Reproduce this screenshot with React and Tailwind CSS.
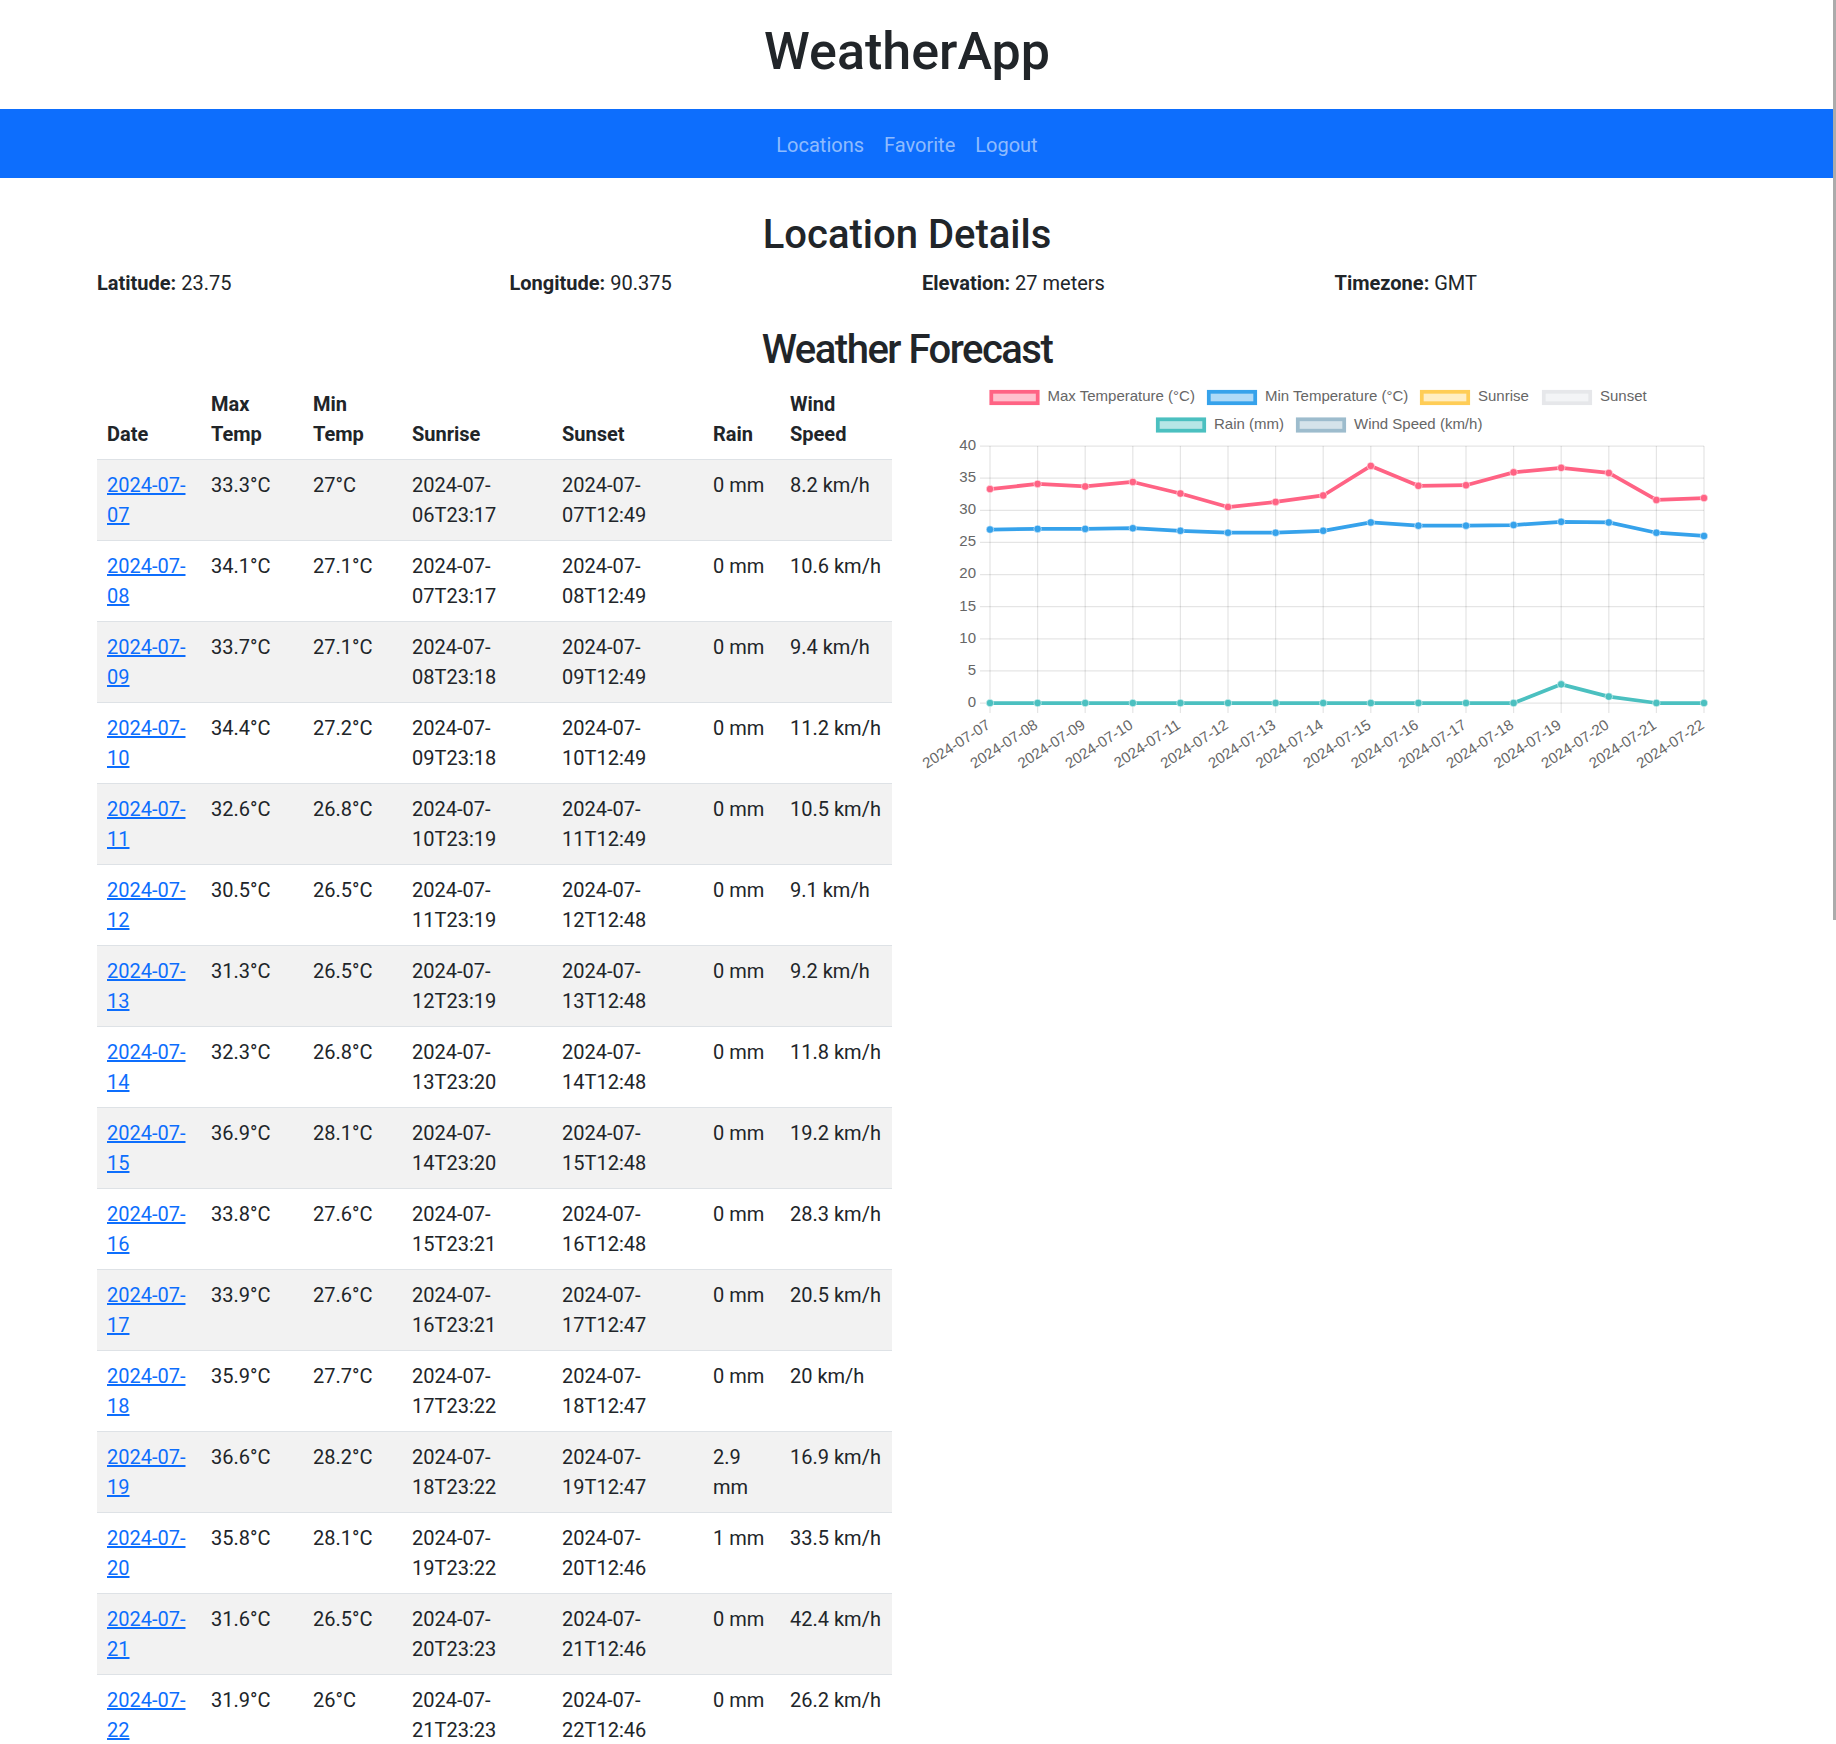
import React from "react";

const forecast = [
  { date: "2024-07-07", max: "33.3", min: "27", sunrise: "2024-07-06T23:17", sunset: "2024-07-07T12:49", rain: "0", wind: "8.2" },
  { date: "2024-07-08", max: "34.1", min: "27.1", sunrise: "2024-07-07T23:17", sunset: "2024-07-08T12:49", rain: "0", wind: "10.6" },
  { date: "2024-07-09", max: "33.7", min: "27.1", sunrise: "2024-07-08T23:18", sunset: "2024-07-09T12:49", rain: "0", wind: "9.4" },
  { date: "2024-07-10", max: "34.4", min: "27.2", sunrise: "2024-07-09T23:18", sunset: "2024-07-10T12:49", rain: "0", wind: "11.2" },
  { date: "2024-07-11", max: "32.6", min: "26.8", sunrise: "2024-07-10T23:19", sunset: "2024-07-11T12:49", rain: "0", wind: "10.5" },
  { date: "2024-07-12", max: "30.5", min: "26.5", sunrise: "2024-07-11T23:19", sunset: "2024-07-12T12:48", rain: "0", wind: "9.1" },
  { date: "2024-07-13", max: "31.3", min: "26.5", sunrise: "2024-07-12T23:19", sunset: "2024-07-13T12:48", rain: "0", wind: "9.2" },
  { date: "2024-07-14", max: "32.3", min: "26.8", sunrise: "2024-07-13T23:20", sunset: "2024-07-14T12:48", rain: "0", wind: "11.8" },
  { date: "2024-07-15", max: "36.9", min: "28.1", sunrise: "2024-07-14T23:20", sunset: "2024-07-15T12:48", rain: "0", wind: "19.2" },
  { date: "2024-07-16", max: "33.8", min: "27.6", sunrise: "2024-07-15T23:21", sunset: "2024-07-16T12:48", rain: "0", wind: "28.3" },
  { date: "2024-07-17", max: "33.9", min: "27.6", sunrise: "2024-07-16T23:21", sunset: "2024-07-17T12:47", rain: "0", wind: "20.5" },
  { date: "2024-07-18", max: "35.9", min: "27.7", sunrise: "2024-07-17T23:22", sunset: "2024-07-18T12:47", rain: "0", wind: "20" },
  { date: "2024-07-19", max: "36.6", min: "28.2", sunrise: "2024-07-18T23:22", sunset: "2024-07-19T12:47", rain: "2.9", wind: "16.9" },
  { date: "2024-07-20", max: "35.8", min: "28.1", sunrise: "2024-07-19T23:22", sunset: "2024-07-20T12:46", rain: "1", wind: "33.5" },
  { date: "2024-07-21", max: "31.6", min: "26.5", sunrise: "2024-07-20T23:23", sunset: "2024-07-21T12:46", rain: "0", wind: "42.4" },
  { date: "2024-07-22", max: "31.9", min: "26", sunrise: "2024-07-21T23:23", sunset: "2024-07-22T12:46", rain: "0", wind: "26.2" },
];

// chart geometry (canvas px)
const X0 = 68;
const X1 = 782;
const Y0 = 324; // value 0
const Y40 = 67; // value 40
const px = (i) => X0 + (i * (X1 - X0)) / (forecast.length - 1);
const py = (v) => Y0 - (v * (Y0 - Y40)) / 40;

const legend = [
  { label: "Max Temperature (°C)", border: "rgb(255,99,132)", fill: "rgba(255,99,132,0.4)", x: 67.5, y: 18.5 },
  { label: "Min Temperature (°C)", border: "rgb(54,162,235)", fill: "rgba(54,162,235,0.4)", x: 285, y: 18.5 },
  { label: "Sunrise", border: "rgb(255,205,86)", fill: "rgba(255,205,86,0.35)", x: 498, y: 18.5 },
  { label: "Sunset", border: "#e6e7ea", fill: "#f3f4f6", x: 620, y: 18.5 },
  { label: "Rain (mm)", border: "rgb(75,192,192)", fill: "rgba(75,192,192,0.4)", x: 234, y: 46 },
  { label: "Wind Speed (km/h)", border: "#9dbccd", fill: "#d5e3ea", x: 374, y: 46 },
];

const series = [
  { key: "max", color: "rgb(255,99,132)" },
  { key: "min", color: "rgb(54,162,235)" },
  { key: "rain", color: "rgb(75,192,192)" },
];

function ForecastChart() {
  const font = "'Liberation Sans', Arial, sans-serif";
  return (
    <svg width="795" height="398" viewBox="0 0 795 398" overflow="visible" className="block overflow-visible">
      {legend.map((l) => (
        <g key={l.label}>
          <rect x={l.x + 1.8} y={l.y - 5.7} width="46.4" height="11.4" fill={l.fill} stroke={l.border} strokeWidth="3.75" />
          <text x={l.x + 58} y={l.y} dominantBaseline="middle" fontSize="15" fill="#666" fontFamily={font}>
            {l.label}
          </text>
        </g>
      ))}

      {/* horizontal grid + y ticks */}
      {[0, 5, 10, 15, 20, 25, 30, 35, 40].map((v) => (
        <g key={v}>
          <line x1="58" x2={X1} y1={py(v)} y2={py(v)} stroke="rgba(0,0,0,0.1)" strokeWidth="1.25" />
          <text x="54" y={py(v)} textAnchor="end" dominantBaseline="middle" fontSize="15" fill="#666" fontFamily={font}>
            {v}
          </text>
        </g>
      ))}

      {/* vertical grid + x ticks */}
      {forecast.map((d, i) => (
        <g key={d.date}>
          <line x1={px(i)} x2={px(i)} y1={Y40} y2={Y0 + 10} stroke="rgba(0,0,0,0.1)" strokeWidth="1.25" />
          <text
            transform={`translate(${px(i) - 1}, ${Y0 + 21}) rotate(-33)`}
            textAnchor="end"
            dominantBaseline="middle"
            fontSize="15"
            fill="#666"
            fontFamily={font}
          >
            {d.date}
          </text>
        </g>
      ))}

      {series.map((s) => (
        <g key={s.key}>
          <polyline
            points={forecast.map((d, i) => `${px(i)},${py(parseFloat(d[s.key]))}`).join(" ")}
            fill="none"
            stroke={s.color}
            strokeWidth="3.75"
            strokeLinejoin="round"
          />
          {forecast.map((d, i) => (
            <circle key={i} cx={px(i)} cy={py(parseFloat(d[s.key]))} r="3.75" fill={s.color} stroke="rgba(255,255,255,0.5)" strokeWidth="1" />
          ))}
        </g>
      ))}
    </svg>
  );
}

export default function App() {
  return (
    <div className="min-h-screen bg-white text-[#212529] font-[Roboto,'Liberation_Sans',sans-serif] text-[20px] leading-[30px]">
      <header className="w-[1814px] pt-[21px] pb-[26px]">
        <h1 className="text-center text-[52px] leading-[62px] font-medium">WeatherApp</h1>
      </header>

      <nav className="bg-[#0d6efd] h-[69px]">
        <div className="w-[1814px] h-full flex items-center justify-center pt-[2px]">
          {["Locations", "Favorite", "Logout"].map((link) => (
            <a key={link} href="#" className="px-[10px] text-[rgba(255,255,255,0.55)]">
              {link}
            </a>
          ))}
        </div>
      </nav>

      <div className="w-[1814px]">
        <main className="w-[1650px] mx-auto px-[15px] pt-[33px] pb-[40px]">
          <h2 className="text-center text-[40px] leading-[48px] font-medium mb-[9px]">Location Details</h2>
          <div className="grid grid-cols-4 gap-[30px]">
            <p><span className="font-bold">Latitude:</span> 23.75</p>
            <p><span className="font-bold">Longitude:</span> 90.375</p>
            <p><span className="font-bold">Elevation:</span> 27 meters</p>
            <p><span className="font-bold">Timezone:</span> GMT</p>
          </div>

          <h2 className="text-center text-[40px] leading-[48px] font-medium tracking-[-1.5px] mt-[28px] mb-[5px]">Weather Forecast</h2>
          <div className="grid grid-cols-2 gap-[30px] items-start">
            <table className="w-full table-fixed border-collapse">
              <colgroup>
                <col className="w-[104px]" />
                <col className="w-[102px]" />
                <col className="w-[99px]" />
                <col className="w-[150px]" />
                <col className="w-[151px]" />
                <col className="w-[77px]" />
                <col className="w-[112px]" />
              </colgroup>
              <thead>
                <tr className="align-bottom">
                  {["Date", "Max Temp", "Min Temp", "Sunrise", "Sunset", "Rain", "Wind Speed"].map((h) => (
                    <th key={h} className="p-[10px] text-left font-bold border-b border-[#dee2e6]">
                      {h}
                    </th>
                  ))}
                </tr>
              </thead>
              <tbody>
                {forecast.map((day, index) => (
                  <tr key={day.date} className={index % 2 === 0 ? "bg-[#f2f2f2] align-top" : "bg-white align-top"}>
                    <td className="p-[10px] border-b border-[#dee2e6]">
                      <a href="#" className="text-[#0d6efd] underline">{day.date}</a>
                    </td>
                    <td className="p-[10px] border-b border-[#dee2e6]">{day.max}°C</td>
                    <td className="p-[10px] border-b border-[#dee2e6]">{day.min}°C</td>
                    <td className="p-[10px] border-b border-[#dee2e6]">{day.sunrise}</td>
                    <td className="p-[10px] border-b border-[#dee2e6]">{day.sunset}</td>
                    <td className="p-[10px] border-b border-[#dee2e6]">{day.rain} mm</td>
                    <td className="p-[10px] border-b border-[#dee2e6]">{day.wind} km/h</td>
                  </tr>
                ))}
              </tbody>
            </table>

            <ForecastChart />
          </div>
        </main>
      </div>

      {/* page scrollbar thumb */}
      <div className="fixed top-0 right-0 w-[3px] h-[920px] bg-[#ababab]" />
    </div>
  );
}
